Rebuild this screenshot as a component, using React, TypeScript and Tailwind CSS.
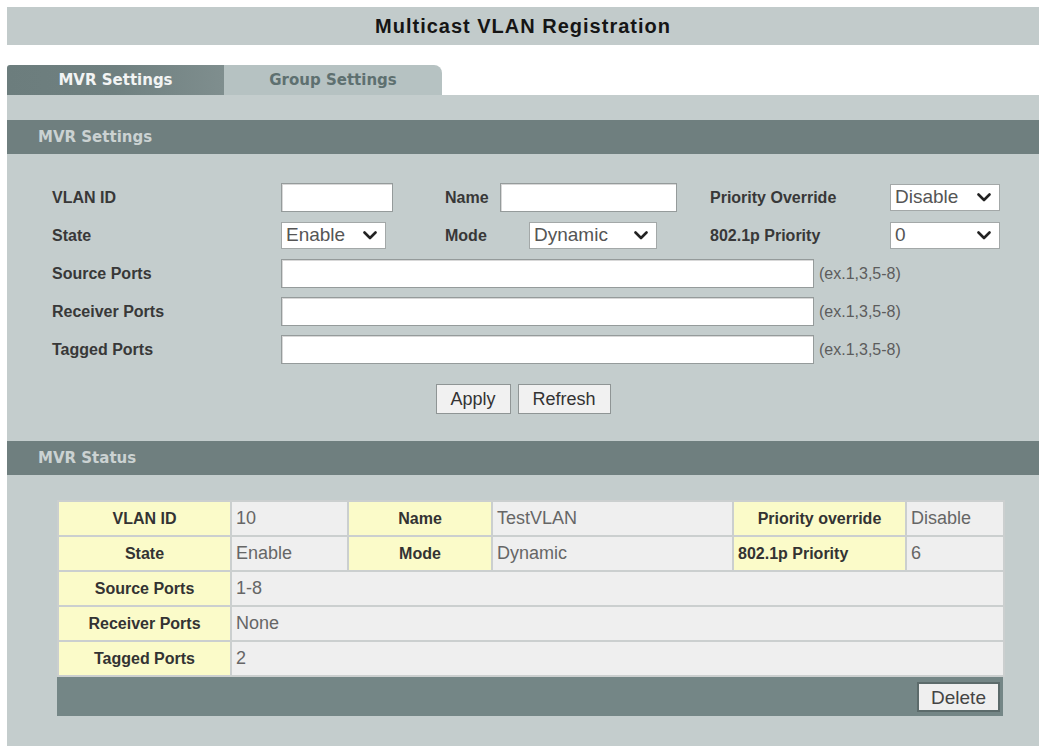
import React from "react";

const arial = { fontFamily: '"Liberation Sans", Arial, sans-serif' };
const deja = { fontFamily: '"DejaVu Sans", Verdana, sans-serif' };

function Chevron() {
  return (
    <svg width="14" height="9" viewBox="0 0 14 9" className="shrink-0">
      <path d="M1.5 1.5 L7 7 L12.5 1.5" fill="none" stroke="#222" strokeWidth="2.6" strokeLinecap="round" strokeLinejoin="round" />
    </svg>
  );
}

function Select({ value, width }: { value: string; width: string }) {
  return (
    <div className={`${width} flex h-[27px] items-center justify-between border border-[#a3a8a8] bg-white pl-[4px] pr-[8px] text-[19px] text-[#555]`}>
      <span>{value}</span>
      <Chevron />
    </div>
  );
}

function TextBox({ width }: { width: string }) {
  return <div className={`${width} h-[29px] border border-[#959b9b] bg-white shadow-[inset_1px_1px_0_#d8d8d8]`} />;
}

function Label({ text, width }: { text: string; width: string }) {
  return <div className={`${width} shrink-0 text-[16px] font-bold text-[#383838]`}>{text}</div>;
}

function SectionHeader({ title }: { title: string }) {
  return (
    <div className="flex h-[34px] items-center bg-[#6f7f7f] pl-[31px] text-[15px] font-bold text-[#cbd2d2]" style={deja}>
      {title}
    </div>
  );
}

const portRows = ["Source Ports", "Receiver Ports", "Tagged Ports"];

const key = "border-2 border-[#cbcfcf] bg-[#fbfbc9] font-bold text-[16px] text-[#333]";
const val = "border-2 border-[#cbcfcf] bg-[#efefef] pl-[4px] text-[18px] text-[#666]";

export default function App() {
  return (
    <div className="min-h-[748px] bg-white px-[7px] pt-[7px]" style={arial}>
      <div className="flex h-[38px] items-center justify-center bg-[#c2cbcb] text-[20px] font-bold tracking-[0.05em] text-[#151515]">
        Multicast VLAN Registration
      </div>

      <div className="mt-[20px] flex h-[30px]" style={deja}>
        <div className="flex w-[217px] items-center justify-center rounded-tl-[3px] bg-gradient-to-r from-[#6c7d7d] via-[#6f8080] to-[#7f8e8e] text-[15px] font-bold text-[#f2f4f4]">
          MVR Settings
        </div>
        <div className="flex w-[218px] items-center justify-center rounded-tr-[8px] bg-[#b6c2c2] text-[15px] font-bold text-[#5e7070]">
          Group Settings
        </div>
      </div>
      <div className="h-[25px] bg-[#c4cdcd]" />

      <SectionHeader title="MVR Settings" />
      <div className="bg-[#c4cdcd] pb-[27px] pl-[45px] pt-[29px]">
        <div className="flex flex-col gap-[9px]">
          <div className="flex h-[29px] items-center">
            <Label text="VLAN ID" width="w-[229px]" />
            <div className="w-[164px] shrink-0">
              <TextBox width="w-[112px]" />
            </div>
            <Label text="Name" width="w-[55px]" />
            <TextBox width="w-[177px]" />
            <div className="w-[33px] shrink-0" />
            <Label text="Priority Override" width="w-[180px]" />
            <Select value="Disable" width="w-[110px]" />
          </div>
          <div className="flex h-[29px] items-center">
            <Label text="State" width="w-[229px]" />
            <div className="w-[164px] shrink-0">
              <Select value="Enable" width="w-[105px]" />
            </div>
            <Label text="Mode" width="w-[84px]" />
            <Select value="Dynamic" width="w-[128px]" />
            <div className="w-[53px] shrink-0" />
            <Label text="802.1p Priority" width="w-[180px]" />
            <Select value="0" width="w-[110px]" />
          </div>
          {portRows.map((r) => (
            <div key={r} className="flex h-[29px] items-center">
              <Label text={r} width="w-[229px]" />
              <TextBox width="w-[533px]" />
              <span className="ml-[5px] text-[16px] text-[#5c5c5c]">(ex.1,3,5-8)</span>
            </div>
          ))}
        </div>
        <div className="mt-[20px] flex justify-center gap-[7px] pr-[45px]">
          <button className="h-[30px] w-[75px] border border-[#8f9595] bg-[#f1f1f1] text-[18px] text-[#333]">Apply</button>
          <button className="h-[30px] w-[93px] border border-[#8f9595] bg-[#f1f1f1] text-[18px] text-[#333]">Refresh</button>
        </div>
      </div>

      <SectionHeader title="MVR Status" />
      <div className="bg-[#c4cdcd] pb-[30px] pl-[50px] pt-[25px]">
        <table className="w-[946px] table-fixed border-collapse">
          <colgroup>
            <col className="w-[173px]" />
            <col className="w-[117px]" />
            <col className="w-[144px]" />
            <col className="w-[241px]" />
            <col className="w-[173px]" />
            <col className="w-[98px]" />
          </colgroup>
          <tbody>
            <tr className="h-[35px]">
              <td className={`${key} text-center`}>VLAN ID</td>
              <td className={val}>10</td>
              <td className={`${key} text-center`}>Name</td>
              <td className={val}>TestVLAN</td>
              <td className={`${key} text-center`}>Priority override</td>
              <td className={val}>Disable</td>
            </tr>
            <tr className="h-[35px]">
              <td className={`${key} text-center`}>State</td>
              <td className={val}>Enable</td>
              <td className={`${key} text-center`}>Mode</td>
              <td className={val}>Dynamic</td>
              <td className={`${key} pl-[4px]`}>802.1p Priority</td>
              <td className={val}>6</td>
            </tr>
            {[
              ["Source Ports", "1-8"],
              ["Receiver Ports", "None"],
              ["Tagged Ports", "2"],
            ].map(([k, v]) => (
              <tr key={k} className="h-[35px]">
                <td className={`${key} text-center`}>{k}</td>
                <td colSpan={5} className={val}>{v}</td>
              </tr>
            ))}
          </tbody>
        </table>
        <div className="flex h-[39px] w-[946px] items-center justify-end bg-[#748686] pr-[3px]">
          <button className="h-[30px] w-[83px] border-2 border-[#5c6b6b] bg-[#efefef] text-[19px] text-[#444]">Delete</button>
        </div>
      </div>
    </div>
  );
}
